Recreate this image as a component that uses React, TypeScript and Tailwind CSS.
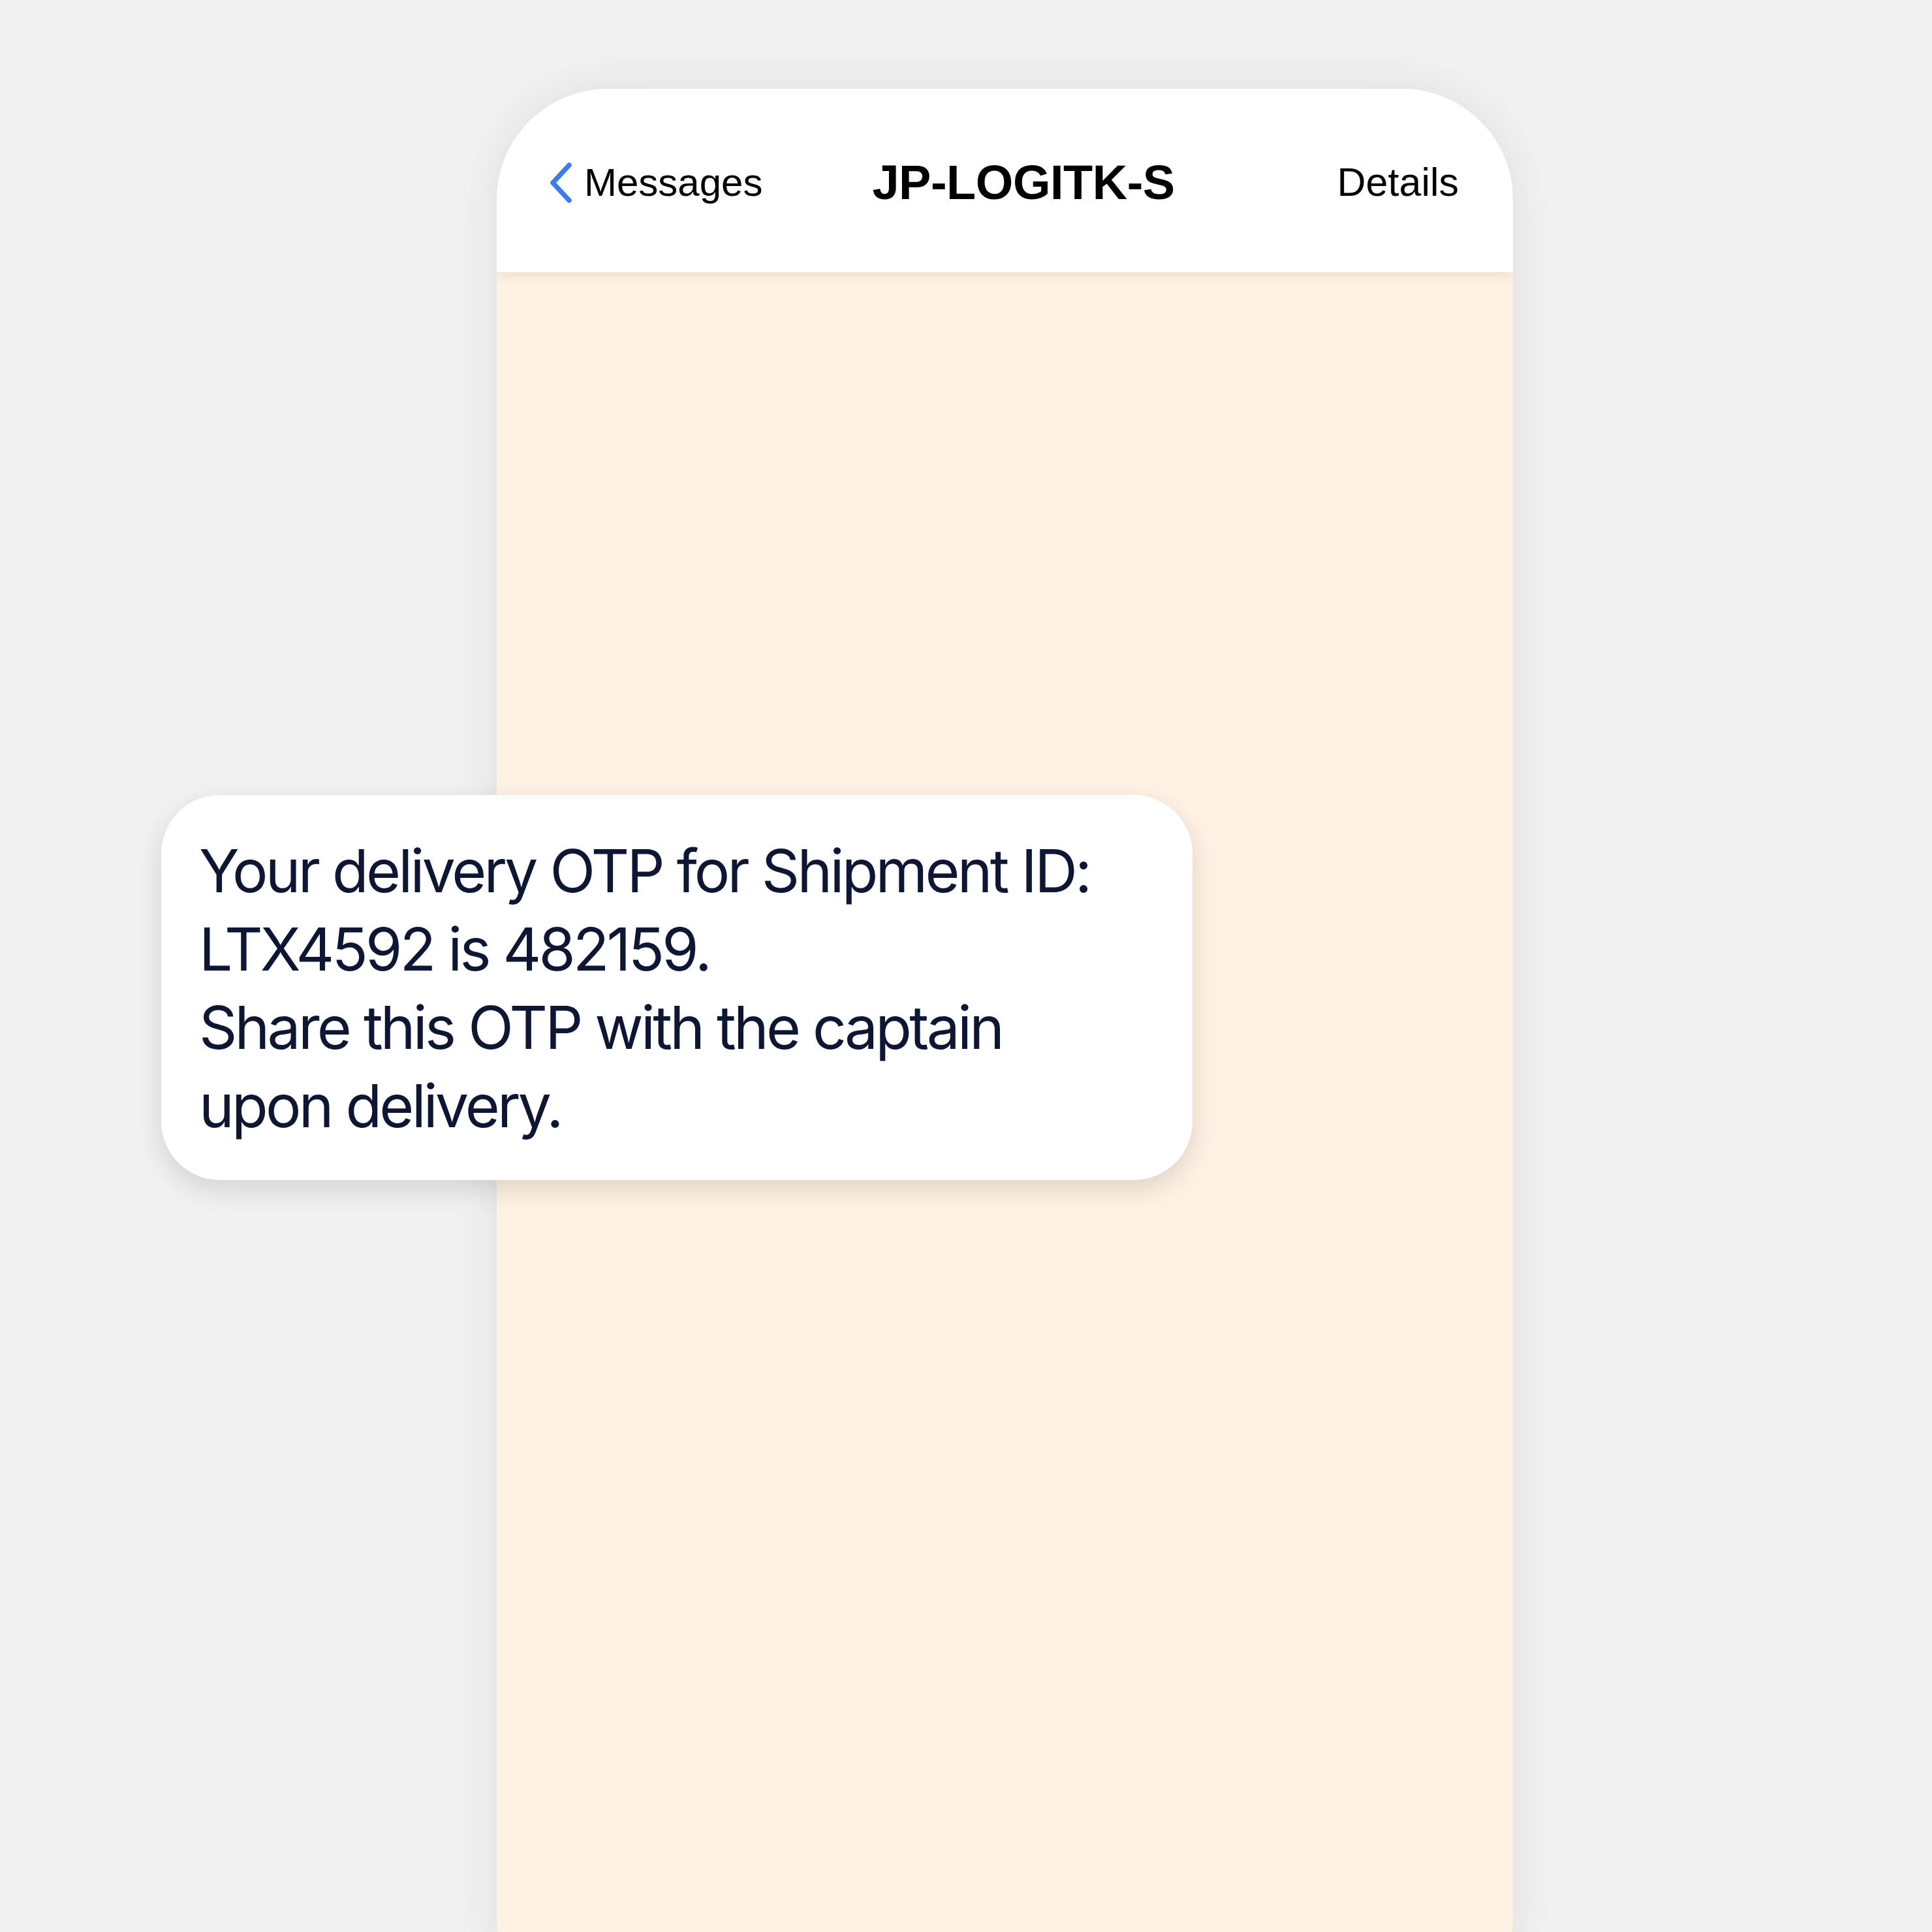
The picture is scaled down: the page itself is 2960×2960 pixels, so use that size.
import React from "react";

function BackChevron() {
  return (
    <svg width="38" height="64" viewBox="0 0 38 64" fill="none" className="shrink-0">
      <polyline
        points="32,5 7,32 32,59"
        stroke="#3b7cf0"
        strokeWidth="7.5"
        strokeLinecap="round"
        strokeLinejoin="round"
      />
    </svg>
  );
}

export default function App() {
  return (
    <div className="relative h-[2960px] w-[2960px] overflow-hidden bg-[#f1f1f1]">
      {/* phone */}
      <div className="ml-[761px] mt-[136px] flex h-[2970px] w-[1557px] flex-col overflow-hidden rounded-[170px] bg-[#fdf2e3] shadow-[0_0_70px_rgba(0,0,0,0.08)]">
        <div className="relative z-10 flex h-[281px] items-center bg-white pl-[79px] pr-[83px] pt-[6px] shadow-[0_6px_16px_rgba(120,90,40,0.12)] font-['Liberation_Sans',Arial,sans-serif] text-black">
          <div className="flex items-center gap-[17px]">
            <BackChevron />
            <span className="text-[60px] leading-none">Messages</span>
          </div>
          <span className="ml-[168px] text-[74px] font-bold leading-none tracking-[-0.5px]">JP-LOGITK-S</span>
          <div className="flex-1" />
          <span className="text-[61px] leading-none">Details</span>
        </div>
        <div className="flex-1" />
      </div>

      {/* message bubble */}
      <div className="absolute left-[247px] top-[1218px] w-[1580px] rounded-[90px] bg-white pb-[54px] pl-[58px] pr-[40px] pt-[56px] shadow-[0_14px_40px_rgba(0,0,0,0.13)]">
        <p className="font-['Inter','Noto_Sans',sans-serif] text-[91px] leading-[120px] tracking-[-3.8px] text-[#0d1633]">
          Your delivery OTP for Shipment ID:
          <br />
          LTX4592 is 482159.
          <br />
          Share this OTP with the captain
          <br />
          upon delivery.
        </p>
      </div>
    </div>
  );
}
